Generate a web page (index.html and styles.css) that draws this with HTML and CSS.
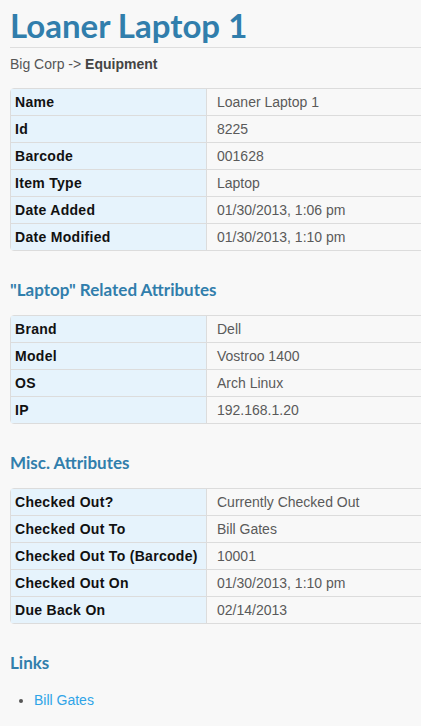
FILE: index.html
```html
<!DOCTYPE html>
<html>
<head>
<meta charset="utf-8">
<title>Loaner Laptop 1</title>
<link rel="stylesheet" href="styles.css">
</head>
<body>
<div class="page">
  <h1 class="title">Loaner Laptop 1</h1>
  <div class="crumbs">Big Corp -&gt; <b>Equipment</b></div>

  <table class="info first">
    <tr><th>Name</th><td>Loaner Laptop 1</td></tr>
    <tr><th>Id</th><td>8225</td></tr>
    <tr><th>Barcode</th><td>001628</td></tr>
    <tr><th>Item Type</th><td>Laptop</td></tr>
    <tr><th>Date Added</th><td>01/30/2013, 1:06 pm</td></tr>
    <tr><th>Date Modified</th><td>01/30/2013, 1:10 pm</td></tr>
  </table>

  <h3 class="section">"Laptop" Related Attributes</h3>
  <table class="info">
    <tr><th>Brand</th><td>Dell</td></tr>
    <tr><th>Model</th><td>Vostroo 1400</td></tr>
    <tr><th>OS</th><td>Arch Linux</td></tr>
    <tr><th>IP</th><td>192.168.1.20</td></tr>
  </table>

  <h3 class="section">Misc. Attributes</h3>
  <table class="info">
    <tr><th>Checked Out?</th><td>Currently Checked Out</td></tr>
    <tr><th>Checked Out To</th><td>Bill Gates</td></tr>
    <tr><th>Checked Out To (Barcode)</th><td>10001</td></tr>
    <tr><th>Checked Out On</th><td>01/30/2013, 1:10 pm</td></tr>
    <tr><th>Due Back On</th><td>02/14/2013</td></tr>
  </table>

  <h3 class="section">Links</h3>
  <ul class="links">
    <li><a href="#">Bill Gates</a></li>
  </ul>
</div>
</body>
</html>
```
FILE: styles.css
```css
html, body {
  margin: 0;
  padding: 0;
  overflow: hidden;
  background: #f8f8f8;
}
body {
  font-family: "Liberation Sans", Arial, sans-serif;
  font-size: 14px;
  line-height: 20px;
  color: #555;
}
.page {
  width: 700px;
  padding: 0 0 0 10px;
}
.title {
  margin: 0;
  padding-top: 8px;
  padding-bottom: 4px;
  font-family: Lato, "Open Sans", sans-serif;
  font-weight: 700;
  font-size: 33px;
  line-height: 35px;
  color: #317eac;
  border-bottom: 1px solid #dedede;
}
.crumbs {
  margin-top: 6px;
  font-size: 14px;
  line-height: 20px;
  color: #555;
}
.crumbs b {
  color: #444;
}
.info {
  margin-top: 13px;
  width: 100%;
  border-collapse: separate;
  border-spacing: 0;
  border: 1px solid #dcdcdc;
  border-radius: 4px;
}
.info.first {
  margin-top: 14px;
}
.info th, .info td {
  height: 26px;
  padding: 0;
  vertical-align: middle;
  border-top: 1px solid #dcdcdc;
}
.info tr:first-child th, .info tr:first-child td {
  border-top: none;
}
.info th {
  width: 191px;
  padding-left: 4px;
  text-align: left;
  font-weight: 700;
  letter-spacing: 0.3px;
  color: #111;
  background: #e6f3fc;
  border-right: 1px solid #dcdcdc;
}
.info td {
  padding-left: 10px;
  color: #5a5a5a;
}
.section {
  margin: 27px 0 0;
  font-family: Lato, "Open Sans", sans-serif;
  font-weight: 700;
  font-size: 17px;
  line-height: 24px;
  color: #317eac;
}
.links {
  margin: 15px 0 0;
  padding-left: 24px;
}
.links a {
  color: #2fa4e7;
  text-decoration: none;
}
```
